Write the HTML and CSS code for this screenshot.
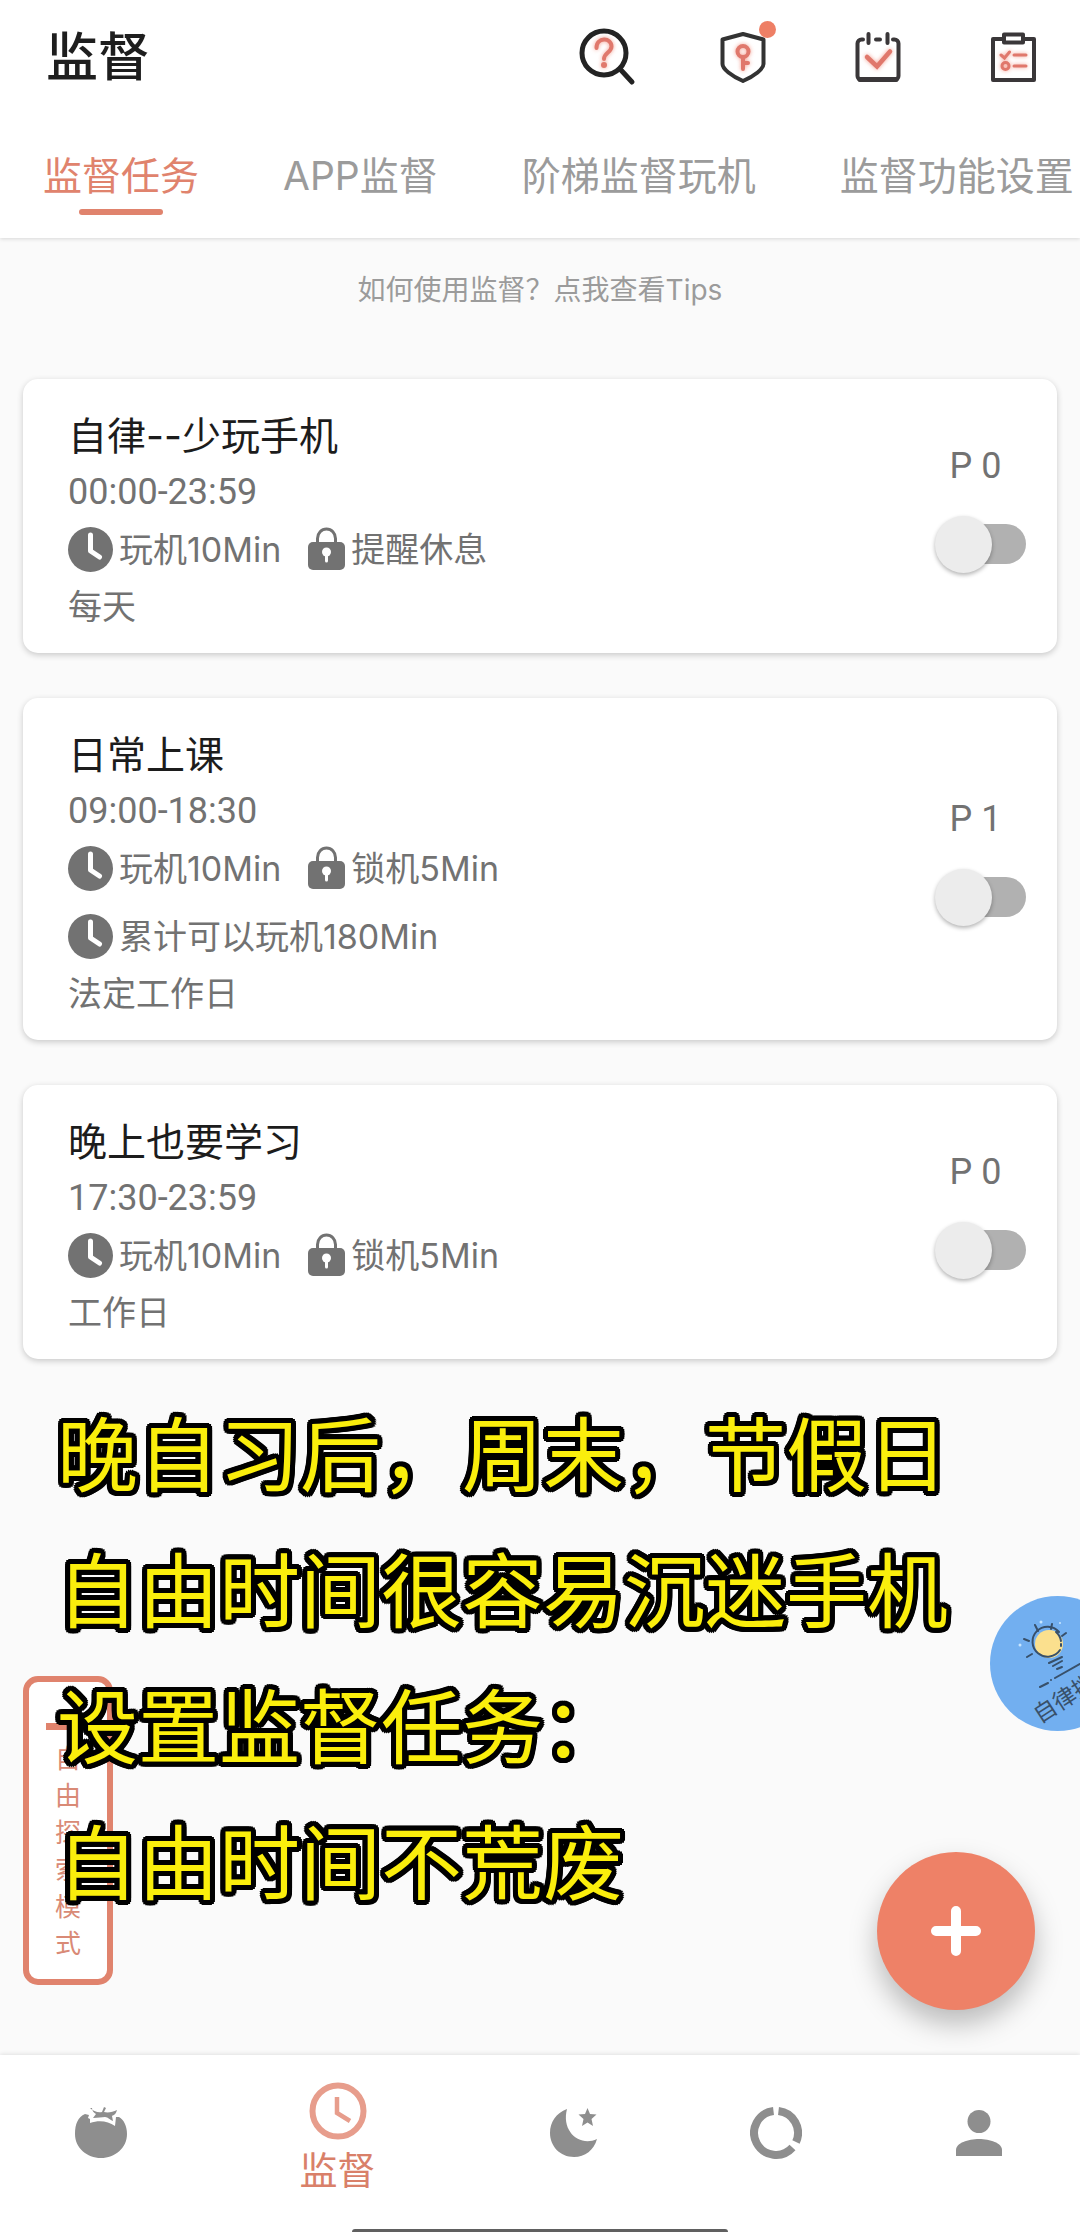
FILE: index.html
```html
<!DOCTYPE html>
<html lang="zh-CN">
<head>
<meta charset="utf-8">
<meta name="viewport" content="width=device-width, initial-scale=1">
<title>监督</title>
<link rel="stylesheet" href="styles.css">
</head>
<body>
<svg class="sprite" aria-hidden="true">
  <symbol id="clock-solid" viewBox="0 0 45 45">
    <circle cx="22.5" cy="22.5" r="22.5" fill="#727272"/>
    <path d="M22.5 8v16l9 6" fill="none" stroke="#fff" stroke-width="5" stroke-linecap="round" stroke-linejoin="round"/>
  </symbol>
  <symbol id="lock-solid" viewBox="0 0 37 45">
    <path d="M9.500 17v-5.500a9 9.500 0 0 1 18 0V17" fill="none" stroke="#727272" stroke-width="3"/>
    <rect y="15" width="37" height="28" rx="5" fill="#727272"/>
    <circle cx="18.500" cy="25" r="4.500" fill="#fff"/>
    <path d="M18.500 26v8" stroke="#fff" stroke-width="3" stroke-linecap="round"/>
  </symbol>
</svg>
<div class="app">
  <header class="header">
    <div class="topbar">
      <h1 class="title">监督</h1>
      <div class="actions">
        <button class="action" type="button" aria-label="帮助">
          <svg width="60" height="60" viewBox="0 0 60 60" fill="none" stroke-linecap="round">
            <circle cx="26" cy="25" r="22" stroke="#232323" stroke-width="5"/>
            <path d="M42 41l12 13" stroke="#232323" stroke-width="5"/>
            <path class="glow" d="M18.500 20c0-11 15-11 15-1.500 0 6-7.500 6-7.500 12.500" stroke="#e0786c" stroke-width="4"/>
            <circle class="glow" cx="26" cy="37" r="3" fill="#e0786c"/>
          </svg>
        </button>
        <button class="action" type="button" aria-label="权限">
          <svg width="60" height="60" viewBox="0 0 60 60" fill="none">
            <path d="M30 6l20.500 5.500V36c0 5-9 12-20.500 17C18.500 48 9.500 41 9.500 36V11.500z" stroke="#333" stroke-width="4" stroke-linejoin="round"/>
            <g class="glow" stroke="#e0786c" stroke-width="4" stroke-linecap="round"><circle cx="30" cy="23.500" r="5.500"/><path d="M30 30v11M31 35h4"/></g>
          </svg>
          <span class="badge"></span>
        </button>
        <button class="action" type="button" aria-label="日程">
          <svg width="60" height="60" viewBox="0 0 60 60" fill="none" stroke-linecap="round">
            <path d="M15 11.500h-1.500a4 4 0 0 0-4 4V48a4 4 0 0 0 4 4h33a4 4 0 0 0 4-4V15.500a4 4 0 0 0-4-4H45M28 11.500h4M20.500 6v9M39.500 6v9" stroke="#3a3739" stroke-width="4"/>
            <path d="M12 51.500h36" stroke="#3a3739" stroke-width="5"/>
            <path class="glow" d="M19 29l10 9.500 13-15" stroke="#e0786c" stroke-width="4.500"/>
          </svg>
        </button>
        <button class="action" type="button" aria-label="清单">
          <svg width="60" height="60" viewBox="0 0 60 60" fill="none">
            <path d="M20 11H10v41h41V11H41" stroke="#3a3739" stroke-width="4" stroke-linejoin="round"/>
            <rect x="21" y="6.500" width="19" height="8" stroke="#3a3739" stroke-width="4" stroke-linejoin="round"/>
            <g class="glow" stroke="#e0786c" stroke-width="3" stroke-linecap="round"><path d="M18 27l3.500 3 5-6M31 27h12M31 38h12"/><circle cx="22.500" cy="38" r="3.500"/></g>
          </svg>
        </button>
      </div>
    </div>
    <nav class="tabs">
      <a class="tab tab-active" href="#tasks">监督任务</a>
      <a class="tab" href="#apps">APP监督</a>
      <a class="tab" href="#steps">阶梯监督玩机</a>
      <a class="tab" href="#settings">监督功能设置</a>
    </nav>
  </header>

  <main class="main">
    <a class="tips" href="#tips">如何使用监督？点我查看Tips</a>
    <div class="cards">
      <section class="card">
        <div class="info">
          <h2 class="name" id="t1">自律--少玩手机</h2>
          <p class="row row-time">00:00-23:59</p>
          <p class="row row-icons">
            <span class="rule"><svg width="45" height="45"><use href="#clock-solid"/></svg>玩机10Min</span>
            <span class="rule"><svg width="37" height="45"><use href="#lock-solid"/></svg>提醒休息</span>
          </p>
          <p class="row">每天</p>
        </div>
        <div class="control"><span class="priority">P 0</span><input class="switch" type="checkbox" role="switch" aria-labelledby="t1"></div>
      </section>
      <section class="card">
        <div class="info">
          <h2 class="name" id="t2">日常上课</h2>
          <p class="row row-time">09:00-18:30</p>
          <p class="row row-icons">
            <span class="rule"><svg width="45" height="45"><use href="#clock-solid"/></svg>玩机10Min</span>
            <span class="rule"><svg width="37" height="45"><use href="#lock-solid"/></svg>锁机5Min</span>
          </p>
          <p class="row row-icons row-extra">
            <span class="rule"><svg width="45" height="45"><use href="#clock-solid"/></svg>累计可以玩机180Min</span>
          </p>
          <p class="row">法定工作日</p>
        </div>
        <div class="control"><span class="priority">P 1</span><input class="switch" type="checkbox" role="switch" aria-labelledby="t2"></div>
      </section>
      <section class="card">
        <div class="info">
          <h2 class="name" id="t3">晚上也要学习</h2>
          <p class="row row-time">17:30-23:59</p>
          <p class="row row-icons">
            <span class="rule"><svg width="45" height="45"><use href="#clock-solid"/></svg>玩机10Min</span>
            <span class="rule"><svg width="37" height="45"><use href="#lock-solid"/></svg>锁机5Min</span>
          </p>
          <p class="row">工作日</p>
        </div>
        <div class="control"><span class="priority">P 0</span><input class="switch" type="checkbox" role="switch" aria-labelledby="t3"></div>
      </section>
    </div>
    <p class="caption">晚自习后，周末，节假日<br>自由时间很容易沉迷手机<br>设置监督任务：<br>自由时间不荒废</p>

    <button class="mode" type="button"><span class="mode-bar"></span><span class="mode-text">自由探索模式</span></button>
    <button class="bubble" type="button" aria-label="自律挑战">
      <svg width="135" height="135" viewBox="0 0 135 135" fill="none" stroke="#38506a" stroke-width="2" stroke-linecap="round">
        <circle cx="59" cy="48" r="14" fill="#fbe08e" stroke="none"/>
        <path d="M70 54a15 15 0 1 1-1-18M71 45a15 15 0 0 0-5-9M71 48v2"/>
        <path d="M37 61l5-3M34 43l5 2M45 29l3 6M62 28l-1 5M72 40l4-3M59 67l13-6M63 70l9-5M67 73l5-2M65 82l48-27M61 84h0M50 91l8-4"/>
        <g fill="#c8e6ff" stroke="none"><circle cx="51" cy="26" r="1.500"/><circle cx="70" cy="27" r="1"/><circle cx="30" cy="49" r="1.500"/></g>
        <text class="bubble-text" transform="translate(50 128) rotate(-33)">自律挑战</text>
      </svg>
    </button>
    <button class="fab" type="button" aria-label="添加任务">
      <svg width="52" height="52" viewBox="0 0 52 52" stroke="#fff" stroke-width="10" stroke-linecap="round"><path d="M26 6v40M6 26h40"/></svg>
    </button>
  </main>

  <footer class="bottom">
    <nav class="nav">
      <a class="nav-item" href="#focus" aria-label="专注">
        <svg width="52" height="52" viewBox="0 0 52 52" fill="#8e8e8e"><path d="M10 7C3 10 0 17 0 27c0 14 12 24 26 24s26-10 26-24c0-8-3-14-8-17l-3 0-1 9c-7-5-16-6-25-3l0-4-2-1 1-3z"/><path d="M15 1c3 3 8 5 12 4l2-5 2 1-2 4c4 1 9 0 13-2-1 4-3 5-5 6l1 5c-3-1-5-4-8-4s-7 1-12 1l3-4c-2-1-4-3-4-6z"/></svg>
      </a>
      <a class="nav-item nav-active" href="#supervise" aria-current="page">
        <svg width="58" height="58" viewBox="0 0 58 58" fill="none" stroke="#e79d8c"><circle cx="29" cy="29" r="25.500" stroke-width="6"/><path d="M28 15v16l13 8" stroke-width="4.500"/></svg>
        <span class="nav-label">监督</span>
      </a>
      <a class="nav-item" href="#sleep" aria-label="睡眠">
        <svg width="50" height="50" viewBox="0 0 50 50" fill="#8e8e8e"><path d="M18 1C7 5 1 14 1 25c0 13 10 24 24 24 11 0 20-7 23-18-17 8-36-7-30-30zM38.500 0l2.500 6 6.500.5-5 4.500 1.500 7-5.500-3.500-5.500 3.500 1.500-7-5-4.500 6.500-.5z"/></svg>
      </a>
      <a class="nav-item" href="#stats" aria-label="统计">
        <svg width="52" height="52" viewBox="0 0 52 52" fill="none" stroke="#8e8e8e" stroke-width="8"><path d="M28.500 4A22 22 0 0 1 46 35M42.500 40.500A22 22 0 1 1 23.500 4"/></svg>
      </a>
      <a class="nav-item" href="#me" aria-label="我的">
        <svg width="48" height="48" viewBox="0 0 48 48" fill="#8e8e8e"><circle cx="24" cy="12.500" r="11.500"/><path d="M1 47v-6c0-7 12-11 23-11s23 4 23 11v6z"/></svg>
      </a>
    </nav>
    <div class="home-bar"></div>
  </footer>
</div>
</body>
</html>
```
FILE: styles.css
```css
* { box-sizing: border-box; }
body, h1, h2, p { margin: 0; }
body {
  background: #fafafa;
  color: #727272;
  font-family: Inter, "Noto Sans CJK SC", sans-serif;
  font-size: 34px;
}
button { padding: 0; border: 0; background: none; font: inherit; cursor: pointer; }
a { color: inherit; text-decoration: none; }
svg { display: block; flex: none; }
.sprite { position: absolute; width: 0; height: 0; }

.app { display: flex; flex-direction: column; min-height: 100vh; overflow: hidden; }

.header { position: relative; background: #fff; box-shadow: 0 1px 4px rgba(0, 0, 0, .14); }
.topbar { display: flex; align-items: center; justify-content: space-between; height: 116px; padding-left: 46px; }
.title { color: #1e1e1e; font-size: 52px; font-weight: 500; line-height: 64px; }
.actions { display: flex; }
.action { position: relative; display: flex; align-items: center; justify-content: center; width: 135px; height: 116px; }
.glow { filter: drop-shadow(0 0 2px rgba(240, 120, 100, .7)); }
.badge { position: absolute; top: 21px; left: 84px; width: 17px; height: 17px; border-radius: 50%; background: #ee7f65; }

.tabs { display: flex; gap: 84px; height: 122px; padding-left: 43px; overflow: hidden; }
.tab { display: flex; flex: none; flex-direction: column; align-items: center; gap: 5px; padding-top: 32px; color: #9b9b9b; font-size: 39px; line-height: 56px; }
.tab-active { color: #e0836d; }
.tab-active::after { content: ""; width: 84px; height: 6px; border-radius: 3px; background: #e0836d; }

.main { position: relative; display: flex; flex: 1; flex-direction: column; padding-bottom: 124px; }
.tips { align-self: center; padding: 32px 0 69px; color: #9b9b9b; font-size: 28px; line-height: 40px; }

.cards { display: flex; flex-direction: column; gap: 45px; padding: 0 23px; }
.card { display: flex; align-items: center; justify-content: space-between; padding: 0 31px 0 45px; border-radius: 15px; background: #fff; box-shadow: 0 2px 6px rgba(0, 0, 0, .2); }
.info { padding: 28px 0 18px; }
.name { color: #1c1c1c; font-size: 39px; font-weight: 400; line-height: 57px; }
.row { line-height: 57px; }
.row-time { font-family: Roboto, sans-serif; font-size: 36px; }
.row-icons { display: flex; align-items: center; gap: 27px; height: 57px; }
.row-extra { margin-top: 11px; }
.rule { display: flex; align-items: center; gap: 6px; }
.control { display: flex; flex-direction: column; align-items: center; gap: 31px; padding-bottom: 11px; }
.priority { padding-right: 10px; font-family: Roboto, sans-serif; font-size: 36px; line-height: 36px; }
.switch { display: grid; align-items: center; width: 91px; height: 58px; margin: 0; appearance: none; cursor: pointer; }
.switch::before { content: ""; grid-area: 1 / 1; height: 40px; margin-left: 9px; border-radius: 20px; background: #b1b1b1; }
.switch::after { content: ""; grid-area: 1 / 1; width: 57px; height: 57px; border-radius: 50%; background: #ececec; box-shadow: 0 2px 4px rgba(0, 0, 0, .3); }
.switch:checked::before { background: #f5b9aa; }
.switch:checked::after { justify-self: end; background: #ee7f65; }

.caption {
  position: relative;
  z-index: 2;
  padding: 23px 0 0 57px;
  color: #faee0c;
  font-family: "Noto Sans CJK SC", sans-serif;
  font-size: 81px;
  line-height: 136px;
  text-shadow:
    5px 0 #000, -5px 0 #000, 0 5px #000, 0 -5px #000,
    4px 4px #000, -4px 4px #000, 4px -4px #000, -4px -4px #000,
    5px 2px #000, -5px 2px #000, 5px -2px #000, -5px -2px #000,
    2px 5px #000, -2px 5px #000, 2px -5px #000, -2px -5px #000,
    2px 0 #000, -2px 0 #000, 0 2px #000, 0 -2px #000;
  pointer-events: none;
}

.mode {
  position: absolute;
  bottom: 70px;
  left: 23px;
  display: flex;
  flex-direction: column;
  align-items: center;
  gap: 10px;
  width: 90px;
  height: 309px;
  padding-top: 41px;
  border: 6px solid #e0836d;
  border-radius: 15px;
  background: #fff;
  color: #d98a76;
}
.mode-bar { width: 44px; height: 7px; background: #e0836d; }
.mode-text { width: 26px; font-size: 26px; line-height: 37px; }

.bubble { position: absolute; right: -45px; bottom: 324px; border-radius: 50%; background: #72aff0; }
.bubble-text { fill: #38506a; stroke: none; font-family: "Noto Sans CJK SC", sans-serif; font-size: 23px; }
.fab {
  position: absolute;
  right: 45px;
  bottom: 45px;
  display: flex;
  align-items: center;
  justify-content: center;
  width: 158px;
  height: 158px;
  border-radius: 50%;
  background: #ee8167;
  box-shadow: 0 14px 28px rgba(0, 0, 0, .26);
}

.bottom { position: relative; display: flex; flex-direction: column; align-items: center; background: #fff; box-shadow: 0 -1px 4px rgba(0, 0, 0, .1); }
.nav { display: flex; align-self: stretch; height: 174px; }
.nav-item { display: flex; flex: 3; align-items: center; justify-content: center; padding-bottom: 18px; }
.nav-active { flex: 4; flex-direction: column; gap: 2px; padding-bottom: 5px; color: #d98069; }
.nav-label { font-size: 38px; line-height: 56px; }
.home-bar { width: 376px; height: 3px; border-radius: 3px 3px 0 0; background: #606060; }
```
